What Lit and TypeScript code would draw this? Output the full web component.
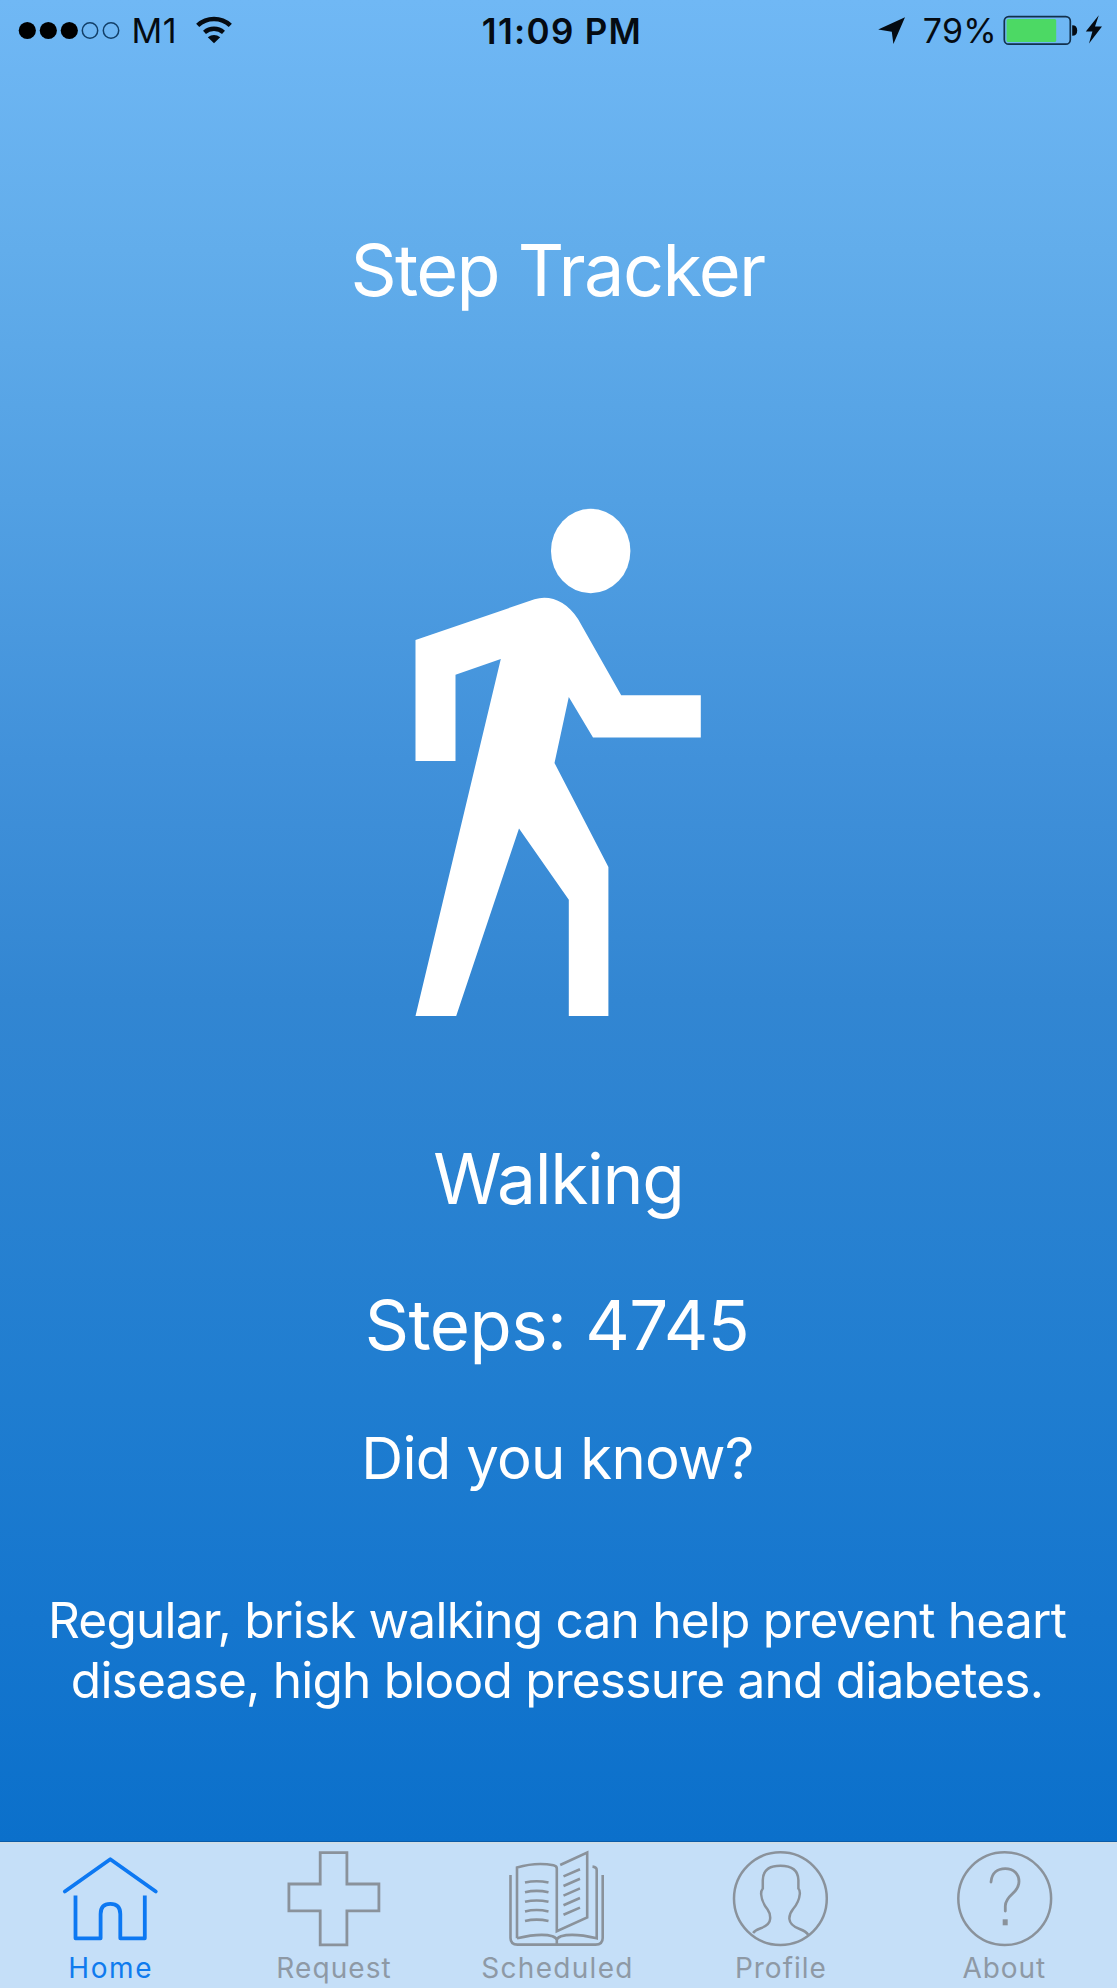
import { LitElement, html, svg, css } from "lit";
import { classMap } from "lit/directives/class-map.js";

const homeIcon = svg`
  <g stroke-width="3.8" stroke-linecap="round" stroke-linejoin="round">
    <path d="M65 1891.5 L110.5 1859.3 L156 1891.5"/>
    <path stroke-linecap="butt" d="M75.7 1895.5 V1938.3 H100.8 V1914 Q100.8 1903.8 110.5 1903.8 Q120.5 1903.8 120.5 1914 V1938.3 H145 V1895.5"/>
  </g>`;

const requestIcon = svg`
  <path stroke-width="2.8" d="M320.3 1852.7 H347 V1884 H379 V1910.8 H347 V1944.8 H320.3 V1910.8 H289 V1884 H320.3 Z"/>`;

const scheduledIcon = svg`
  <g stroke-width="2.6">
    <path d="M511 1875 V1938 Q511 1944.6 518 1944.6 H596 Q603.2 1944.6 603.2 1938 V1875"/>
    <path d="M517.5 1938.3 V1867.5 Q537 1861.8 554 1865.3 Q557.3 1866 557.3 1868.5 V1931.2 L587.7 1917.4 V1852.6 L560.7 1865"/>
    <path d="M517.5 1938.3 Q541 1932.8 553 1936.2 Q557.3 1938 557.3 1940 Q557.3 1938 561.5 1936.2 Q574 1932.8 597.2 1938.3 V1870 Q597.2 1867 593 1866.6"/>
    <path d="M557.3 1938 V1944.6"/>
    <path d="M525.5 1882.6 Q537 1879.9 549 1882.6 M525.5 1892.2 Q537 1889.5 549 1892.2 M525.5 1901.8 Q537 1899.1 549 1901.8 M525.5 1911.4 Q537 1908.7 549 1911.4 M525.5 1921 Q537 1918.3 549 1921"/>
    <path d="M564 1876.4 L580.5 1869.2 M564 1886 L580.5 1878.8 M564 1895.6 L580.5 1888.4 M564 1905.2 L580.5 1898 M564 1914.8 L580.5 1907.6"/>
  </g>`;

const profileIcon = svg`
  <g stroke-width="2.5">
    <circle cx="780.3" cy="1898.6" r="46.4"/>
    <path d="M753 1933 Q755 1930.2 760 1928.5 Q769.8 1925 770 1919 Q770.6 1914 767.5 1909.5 Q761.5 1902 761 1894 Q761 1890.5 762.7 1888.5 V1880 Q763 1865.8 780.3 1865.8 Q797.8 1865.8 798.3 1880 V1888.5 Q800 1890.5 799.7 1894 Q799 1902 793 1909 Q789 1914 789.3 1919 Q789.8 1925.5 799.5 1929 Q806 1931.3 808.3 1935"/>
  </g>`;

const aboutIcon = svg`
  <g stroke-width="2.5">
    <circle cx="1005" cy="1898.6" r="46.4"/>
    <path stroke-width="2.8" stroke-linecap="round" d="M991.3 1882 C992 1873 998 1868.6 1005.5 1868.6 C1014 1868.6 1019.3 1874 1019.3 1881.5 C1019.3 1887 1017 1889.8 1013 1893.5 C1008 1898 1005.6 1901 1005.6 1906 V1911"/>
    <rect x="1003" y="1919.3" width="5" height="6" fill="currentColor" stroke="none"/>
  </g>`;

const tabs = [
  { label: "Home", icon: homeIcon, cx: 111.2, ls: 1.6 },
  { label: "Request", icon: requestIcon, cx: 334.1, ls: 1.1 },
  { label: "Scheduled", icon: scheduledIcon, cx: 557.5, ls: 1.3 },
  { label: "Profile", icon: profileIcon, cx: 780.9, ls: 1.0 },
  { label: "About", icon: aboutIcon, cx: 1004.3, ls: 0.97 },
];

class StatusBar extends LitElement {
  static styles = css`
    :host {
      display: grid;
      grid-template-columns: 1fr auto 1fr;
      height: 62px;
      color: #050b12;
      font: 400 34px/62px Inter, "Liberation Sans", sans-serif;
      box-sizing: border-box;
      padding: 0 14px 0 18px;
      white-space: nowrap;
    }
    .side { display: flex; align-items: flex-start; }
    .right { justify-content: flex-end; }
    .time { font-size: 35px; font-weight: 600; letter-spacing: 1.3px; margin-left: 3px; }
    .carrier { margin-left: 10.5px; letter-spacing: 0.6px; }
    .wifi { margin-left: 17.5px; }
    .level { margin: 0 6px 0 17px; letter-spacing: 0.25px; }
    svg { display: block; height: 62px; flex: none; }
  `;
  render() {
    return html`
      <div class="side">
        <svg width="103" viewBox="18 0 103 62">
          ${[27.3, 48.3, 69.3].map((x) => svg`<circle cx=${x} cy="30.5" r="8.6" fill="#000"/>`)}
          ${[90, 111].map((x) => svg`<circle cx=${x} cy="30.5" r="7.7" fill="none" stroke="#123f68" stroke-width="1.5"/>`)}
        </svg>
        <span class="carrier">M1</span>
        <svg class="wifi" width="38" viewBox="196.5 0 38 62" fill="none" stroke="#050b12">
          <path stroke-width="4.6" d="M199.2 25.4 A24 24 0 0 1 231.8 25.4"/>
          <path stroke-width="4.4" d="M206 32.3 A14.3 14.3 0 0 1 225 32.3"/>
          <path fill="#050b12" stroke="none" d="M209.3 37.2 Q215.5 32.6 221.7 37.2 L215.5 43.2 Z"/>
        </svg>
      </div>
      <span class="time">11:09 PM</span>
      <div class="side right">
        <svg width="28" viewBox="879 0 28 62"><path fill="#050b12" d="M906 17.3 L894.4 44 L892.8 31.8 L879.2 29.6 Z"/></svg>
        <span class="level">79%</span>
        <svg width="100" viewBox="1003 0 100 62">
          <rect x="1004.3" y="16.6" width="66" height="27.6" rx="4.5" fill="none" stroke="#12304c" stroke-width="1.7"/>
          <rect x="1006.6" y="18.9" width="49.6" height="23" rx="1.5" fill="#4cd964"/>
          <path fill="#050b12" d="M1072.2 25.3 Q1077.2 25.3 1077.2 30.5 Q1077.2 35.8 1072.2 35.8 Z"/>
          <path fill="#050b12" d="M1098.8 15.2 L1085.8 31.6 H1092.4 L1089 43.6 L1102 26.6 H1095 Z"/>
        </svg>
      </div>
    `;
  }
}
customElements.define("status-bar", StatusBar);

class TabBar extends LitElement {
  static properties = { active: { type: String } };
  active = "";
  constructor() {
    super();
    this.active = "Home";
  }
  static styles = css`
    :host {
      display: grid;
      grid-template-columns: repeat(5, 1fr);
      height: 146px;
      box-sizing: border-box;
      border-top: 2px solid #d0dee8;
      background: #c5dff8;
      font: 400 28px/34px Inter, "Liberation Sans", sans-serif;
    }
    .tab {
      display: flex;
      flex-direction: column;
      align-items: center;
      color: #8e99a5;
      padding-right: 2px;
    }
    .active { color: #0f7bee; }
    svg { display: block; fill: none; stroke: #8a929b; color: #8a929b; }
    .active svg { stroke: #0d78f2; }
    .label { margin-top: 2.5px; }
  `;
  render() {
    return tabs.map(
      (t) => html`
        <div class=${classMap({ tab: true, active: t.label === this.active })}>
          <svg width="104" height="104" viewBox="${t.cx - 52} 1844 104 104">${t.icon}</svg>
          <span class="label" style="letter-spacing:${t.ls}px">${t.label}</span>
        </div>
      `,
    );
  }
}
customElements.define("tab-bar", TabBar);

class AppRoot extends LitElement {
  static styles = css`
    :host {
      display: flex;
      flex-direction: column;
      width: 100%;
      height: 1988px;
      color: #fff;
      font-family: Inter, "Liberation Sans", sans-serif;
      background: linear-gradient(#70b8f5 0px, #62adeb 250px, #52a0e3 500px, #4191da 760px, #3286d2 1000px, #1f7dd0 1400px, #1576ce 1620px, #0b70cb 1842px);
      overflow: hidden;
    }
    main {
      flex: 1;
      display: flex;
      flex-direction: column;
      align-items: center;
      text-align: center;
      white-space: nowrap;
      border-bottom: 1px solid #0a5ca9;
    }
    h1, h2, p { margin: 0; font-weight: 400; }
    .title { margin-top: 163.5px; padding-right: 2px; font-size: 72px; line-height: 88px; letter-spacing: -1.6px; }
    .walker { display: block; margin-top: 186.5px; margin-right: 1px; }
    .activity { margin-top: 117px; font-size: 69.5px; line-height: 84px; letter-spacing: -1.31px; }
    .steps { margin-top: 62px; padding-right: 3px; font-size: 69px; line-height: 84px; letter-spacing: -0.55px; }
    .question { margin-top: 55.5px; padding-right: 2px; height: 68px; overflow: hidden; font-size: 58px; line-height: 70px; letter-spacing: -0.7px; }
    .fact { margin-top: 99.5px; padding-right: 3px; font-size: 49.6px; line-height: 60px; letter-spacing: -0.8px; }
  `;
  render() {
    return html`
      <status-bar></status-bar>
      <main>
        <h1 class="title">Step Tracker</h1>
        <svg class="walker" width="300" height="520" viewBox="408.5 500 300 520" fill="#fff">
          <ellipse cx="591.2" cy="551" rx="39.7" ry="42.2"/>
          <path d="M416 640 L535 599.3 C550 594.5 567 601 578.5 619 L621.7 695.2 H701.3 V737.5 H593.5 L569.3 697 L555 763 L608.9 867 V1016 H569.3 V899.7 L519.5 828.5 L456.7 1016 H416 L501.3 659 L456 674.8 V761 H416 Z"/>
        </svg>
        <h2 class="activity">Walking</h2>
        <p class="steps">Steps: 4745</p>
        <p class="question">Did you know?</p>
        <p class="fact">Regular, brisk walking can help prevent heart<br>disease, high blood pressure and diabetes.</p>
      </main>
      <tab-bar></tab-bar>
    `;
  }
}
customElements.define("app-root", AppRoot);
